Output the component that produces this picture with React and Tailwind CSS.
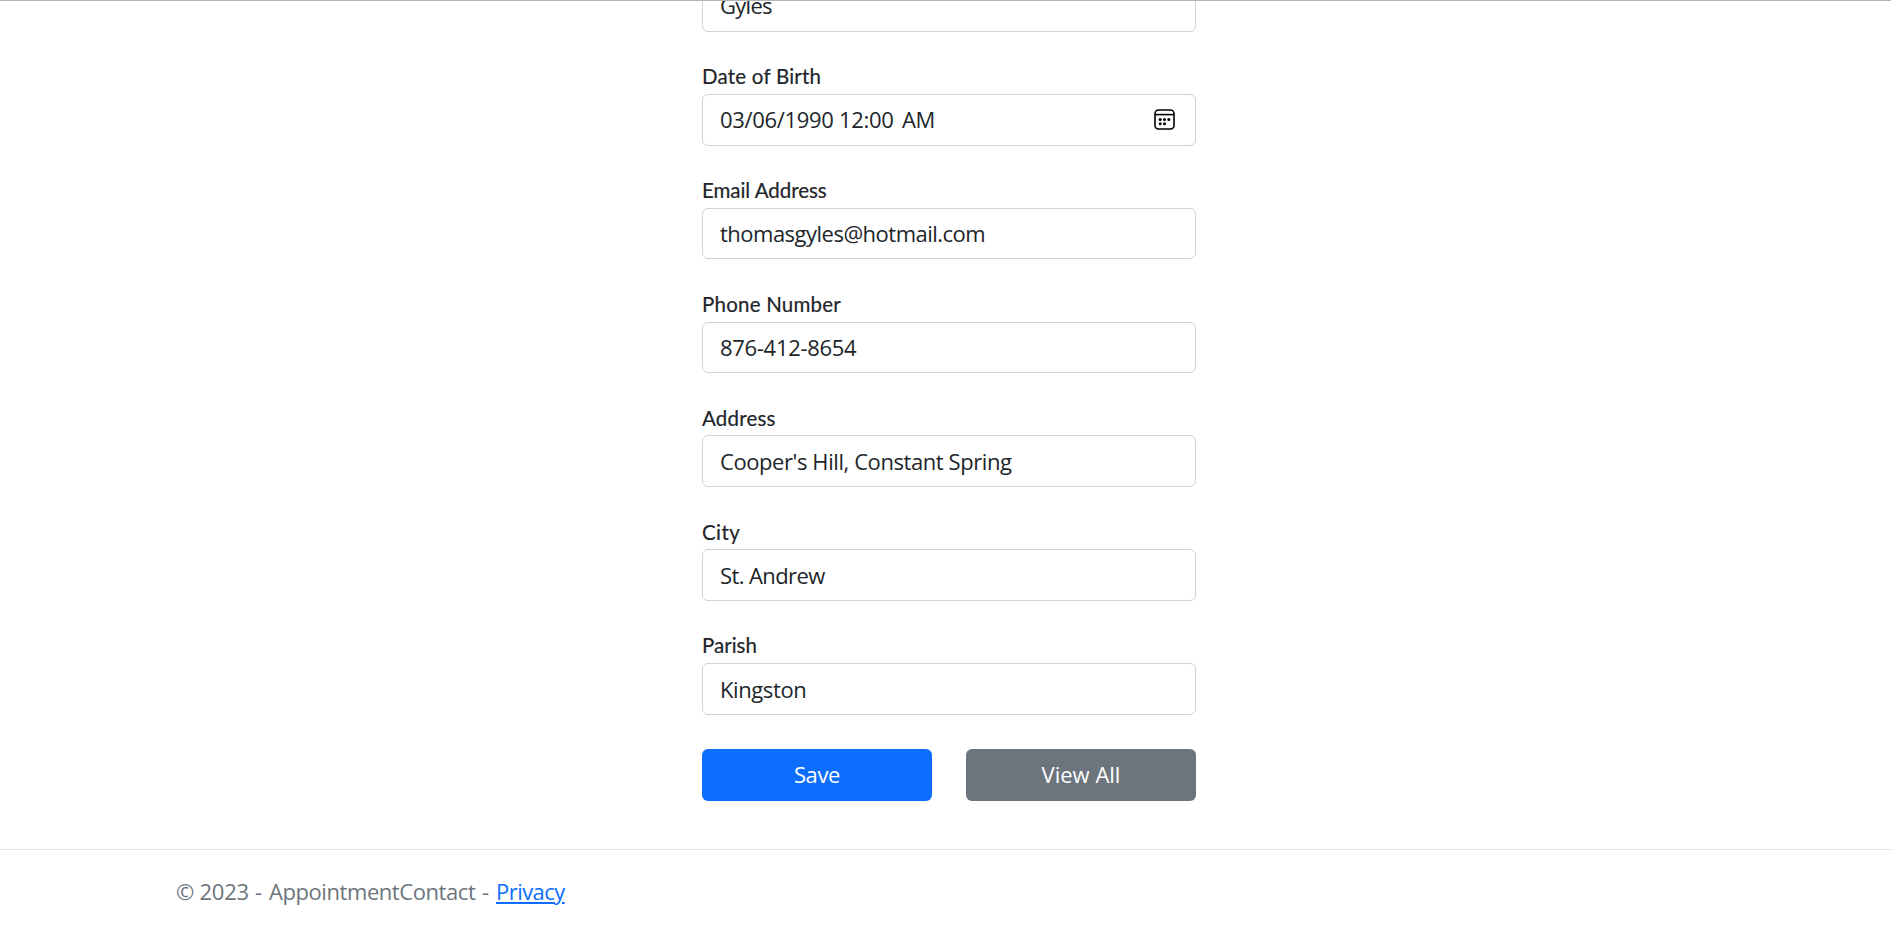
function Field({ label, labelClass, children, valueClass, icon }) {
  return (
    <div className="mb-[33.75px]">
      <label className={`flex h-[28.5px] items-center pb-[6.6px] font-['Lato',sans-serif] text-[20.5px] leading-none [-webkit-text-stroke:0.2px_#212529] ${labelClass}`}>
        {label}
      </label>
      <div className="flex h-[51.6px] items-center justify-between rounded-[6px] border border-[#ced4da] bg-white pl-[17px] pr-[20px]">
        <span className={`whitespace-nowrap pb-[0.6px] ${valueClass}`}>{children}</span>
        {icon}
      </div>
    </div>
  );
}

function CalendarIcon() {
  return (
    <svg width="21" height="21" viewBox="0 0 21 21" fill="none" stroke="#000" strokeWidth="1.6">
      <rect x="1" y="1" width="19" height="19" rx="3.5" />
      <path d="M1 5.6h19" />
      <g fill="#000" stroke="none">
        <circle cx="6.2" cy="10.4" r="1.5" />
        <circle cx="10.5" cy="10.4" r="1.5" />
        <circle cx="14.8" cy="10.4" r="1.5" />
        <circle cx="6.2" cy="14.7" r="1.5" />
        <circle cx="10.5" cy="14.7" r="1.5" />
      </g>
    </svg>
  );
}

export default function App() {
  return (
    <div className="flex h-[925px] flex-col overflow-hidden border-t border-[#b3b3b3] bg-white font-['Open_Sans','Noto_Sans',sans-serif] text-[22px] leading-[30px] text-[#212529]">
      <main className="ml-[702px] h-[848px] w-[494px] shrink-0">
        <div className="-mt-[20.9px] mb-[33.75px] flex h-[51.6px] items-center rounded-[6px] border border-[#ced4da] pl-[17px]">
          <span className="pb-px tracking-[-0.7px]">Gyles</span>
        </div>
        <Field label="Date of Birth" labelClass="tracking-[0.22px]" valueClass="flex tracking-[-0.32px]" icon={<CalendarIcon />}>
          <span className="w-[119px]">03/06/1990</span>
          <span className="w-[63px]">12:00</span>
          <span>AM</span>
        </Field>
        <Field label="Email Address" labelClass="tracking-[-0.04px]" valueClass="tracking-[-0.51px]">thomasgyles@hotmail.com</Field>
        <Field label="Phone Number" labelClass="tracking-[0.22px]" valueClass="tracking-[-0.3px]">876-412-8654</Field>
        <Field label="Address" labelClass="tracking-[0.2px]" valueClass="tracking-[-0.42px]">Cooper's Hill, Constant Spring</Field>
        <Field label="City" labelClass="tracking-[0.4px]" valueClass="tracking-[-0.6px]">St. Andrew</Field>
        <Field label="Parish" labelClass="tracking-[0px]" valueClass="tracking-[-0.4px]">Kingston</Field>
        <div className="grid grid-cols-2 gap-[34px] text-white">
          <button className="h-[52px] rounded-[6px] bg-[#0d6efd] pb-[2px] tracking-[-0.35px]">Save</button>
          <button className="h-[52px] rounded-[6px] bg-[#6c757d] pb-[2px]">View All</button>
        </div>
      </main>
      <footer className="flex grow items-start border-t border-[#dee2e6] pl-[176px] pt-[26px] text-[#6c757d]">
        <span className="w-[79px] whitespace-pre tracking-[-0.25px]">© 2023</span>
        <span className="w-[14px]">-</span>
        <span className="w-[213px] tracking-[-0.43px]">AppointmentContact</span>
        <span className="w-[14px]">-</span>
        <a href="#privacy" className="tracking-[-0.55px] text-[#0d6efd] underline decoration-[2px] underline-offset-[2px]">Privacy</a>
      </footer>
    </div>
  );
}
